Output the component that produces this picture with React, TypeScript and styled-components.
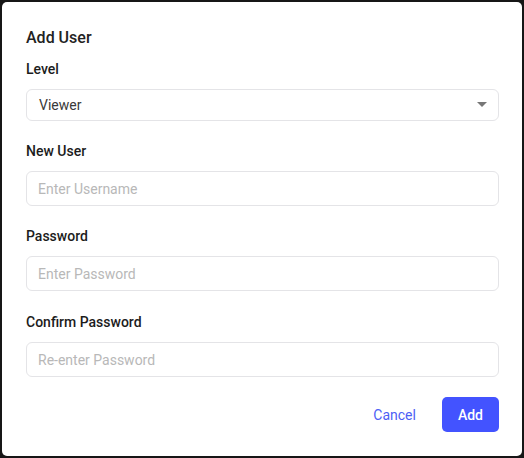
import React from "react";
import styled, { createGlobalStyle } from "styled-components";

const GlobalStyle = createGlobalStyle`
  html, body {
    margin: 0;
    padding: 0;
    background: #161616;
    font-family: Roboto, "Liberation Sans", sans-serif;
  }
  * {
    box-sizing: border-box;
  }
`;

const Dialog = styled.div`
  margin: 2px;
  width: 520px;
  height: 454px;
  background: #fff;
  border-radius: 5px;
  padding: 26px 23px 0 24px;
  display: flex;
  flex-direction: column;
`;

const Title = styled.h2`
  margin: 0;
  font-size: 16px;
  line-height: 20px;
  font-weight: 500;
  color: #222;
`;

const Field = styled.div<{ $top: number }>`
  display: flex;
  flex-direction: column;
  gap: 10px;
  margin-top: ${(p) => p.$top}px;
`;

const Label = styled.label`
  font-size: 14px;
  line-height: 20px;
  font-weight: 500;
  color: #1c1c1c;
`;

const SelectBox = styled.div`
  position: relative;
  height: 32px;
  border: 1px solid #e4e4e7;
  border-radius: 6px;
  display: flex;
  align-items: center;
  padding: 0 12px;
  font-size: 14px;
  color: #3a3a3a;
`;

const Caret = styled.span`
  position: absolute;
  right: 11px;
  top: 12px;
  width: 0;
  height: 0;
  border-left: 5px solid transparent;
  border-right: 5px solid transparent;
  border-top: 5px solid #777;
`;

const Input = styled.input`
  height: 35px;
  border: 1px solid #e4e4e7;
  border-radius: 6px;
  padding: 0 11px;
  font-size: 14px;
  font-family: Roboto, "Liberation Sans", sans-serif;
  color: #333;
  outline: none;
  &::placeholder {
    color: #b8b8b8;
  }
`;

const Actions = styled.div`
  display: flex;
  justify-content: flex-end;
  align-items: center;
  gap: 10px;
  margin-top: 20px;
`;

const Button = styled.button<{ $primary?: boolean }>`
  height: 35px;
  padding: 0 16px;
  border: none;
  border-radius: 5px;
  font-family: Roboto, "Liberation Sans", sans-serif;
  font-size: 14px;
  font-weight: ${(p) => (p.$primary ? 500 : 400)};
  background: ${(p) => (p.$primary ? "#4353ff" : "transparent")};
  color: ${(p) => (p.$primary ? "#fff" : "#4d5ef5")};
  cursor: pointer;
`;

export default function App() {
  return (
    <>
      <GlobalStyle />
      <Dialog>
        <Title>Add User</Title>
        <Field $top={11}>
          <Label>Level</Label>
          <SelectBox>
            Viewer
            <Caret />
          </SelectBox>
        </Field>
        <Field $top={20}>
          <Label>New User</Label>
          <Input placeholder="Enter Username" />
        </Field>
        <Field $top={20}>
          <Label>Password</Label>
          <Input type="password" placeholder="Enter Password" />
        </Field>
        <Field $top={21}>
          <Label>Confirm Password</Label>
          <Input type="password" placeholder="Re-enter Password" />
        </Field>
        <Actions>
          <Button>Cancel</Button>
          <Button $primary>Add</Button>
        </Actions>
      </Dialog>
    </>
  );
}
